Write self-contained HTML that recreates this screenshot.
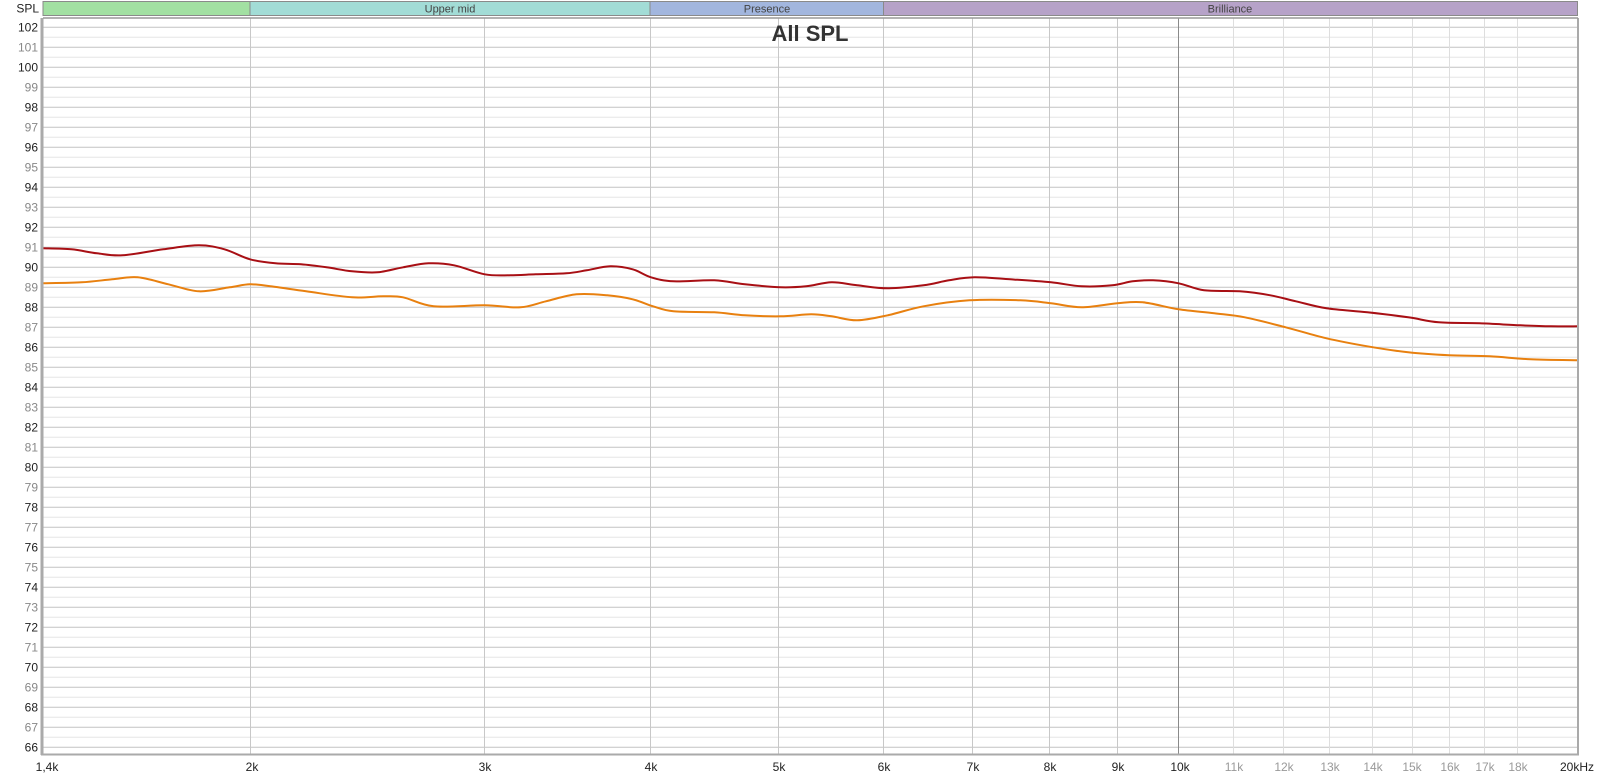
<!DOCTYPE html>
<html><head><meta charset="utf-8"><style>
html,body{margin:0;padding:0;background:#fff;}
svg{display:block;font-family:"Liberation Sans",sans-serif;}
</style></head><body>
<svg id="s" width="1600" height="779" viewBox="0 0 1600 779" xmlns="http://www.w3.org/2000/svg">
<g id="grid"></g>
<rect x="43" y="1.5" width="207" height="14" fill="#a2e0a2" stroke="#8a8a8a"/>
<rect x="250" y="1.5" width="400" height="14" fill="#a2dcd6" stroke="#8a8a8a"/>
<rect x="650" y="1.5" width="233.5" height="14" fill="#a2b6de" stroke="#8a8a8a"/>
<rect x="883.5" y="1.5" width="694" height="14" fill="#b6a2c8" stroke="#8a8a8a"/>
<g font-size="11" fill="#444" text-anchor="middle">
<text x="450" y="12.5">Upper mid</text>
<text x="767" y="12.5">Presence</text>
<text x="1230" y="12.5">Brilliance</text>
</g>
<text x="39" y="12.5" font-size="12" text-anchor="end" fill="#222">SPL</text>
<text x="810" y="41" font-size="22" font-weight="bold" text-anchor="middle" fill="#333">All SPL</text>
<g id="curves"></g>
<line x1="42" y1="18" x2="42" y2="755" stroke="#aaa" stroke-width="3"/>
<line x1="41" y1="754.5" x2="1579" y2="754.5" stroke="#aaa" stroke-width="2"/>
<line x1="1578" y1="18" x2="1578" y2="755" stroke="#aaa" stroke-width="2"/>
<line x1="43" y1="18" x2="1578" y2="18" stroke="#999" stroke-width="1.5"/>
<g font-size="12" text-anchor="end">
<text x="38" y="31.5" fill="#222">102</text><text x="38" y="51.5" fill="#888">101</text>
<text x="38" y="71.5" fill="#222">100</text><text x="38" y="91.5" fill="#888">99</text>
<text x="38" y="111.5" fill="#222">98</text><text x="38" y="131.5" fill="#888">97</text>
<text x="38" y="151.5" fill="#222">96</text><text x="38" y="171.5" fill="#888">95</text>
<text x="38" y="191.5" fill="#222">94</text><text x="38" y="211.5" fill="#888">93</text>
<text x="38" y="231.5" fill="#222">92</text><text x="38" y="251.5" fill="#888">91</text>
<text x="38" y="271.5" fill="#222">90</text><text x="38" y="291.5" fill="#888">89</text>
<text x="38" y="311.5" fill="#222">88</text><text x="38" y="331.5" fill="#888">87</text>
<text x="38" y="351.5" fill="#222">86</text><text x="38" y="371.5" fill="#888">85</text>
<text x="38" y="391.5" fill="#222">84</text><text x="38" y="411.5" fill="#888">83</text>
<text x="38" y="431.5" fill="#222">82</text><text x="38" y="451.5" fill="#888">81</text>
<text x="38" y="471.5" fill="#222">80</text><text x="38" y="491.5" fill="#888">79</text>
<text x="38" y="511.5" fill="#222">78</text><text x="38" y="531.5" fill="#888">77</text>
<text x="38" y="551.5" fill="#222">76</text><text x="38" y="571.5" fill="#888">75</text>
<text x="38" y="591.5" fill="#222">74</text><text x="38" y="611.5" fill="#888">73</text>
<text x="38" y="631.5" fill="#222">72</text><text x="38" y="651.5" fill="#888">71</text>
<text x="38" y="671.5" fill="#222">70</text><text x="38" y="691.5" fill="#888">69</text>
<text x="38" y="711.5" fill="#222">68</text><text x="38" y="731.5" fill="#888">67</text>
<text x="38" y="751.5" fill="#222">66</text>
</g>
<g font-size="12" text-anchor="middle" fill="#222">
<text x="47" y="771">1,4k</text>
<text x="252" y="771">2k</text>
<text x="485" y="771">3k</text>
<text x="651" y="771">4k</text>
<text x="779" y="771">5k</text>
<text x="884" y="771">6k</text>
<text x="973" y="771">7k</text>
<text x="1050" y="771">8k</text>
<text x="1118" y="771">9k</text>
<text x="1180" y="771">10k</text>
<g fill="#999">
<text x="1234" y="771">11k</text><text x="1284" y="771">12k</text><text x="1330" y="771">13k</text>
<text x="1373" y="771">14k</text><text x="1412" y="771">15k</text><text x="1450" y="771">16k</text>
<text x="1485" y="771">17k</text><text x="1518" y="771">18k</text>
</g>
<text x="1577" y="771">20kHz</text>
</g>
</svg>
<script>
var NS="http://www.w3.org/2000/svg";
function X(f){return 44.3+1327.7*Math.log10(f/1.4);}
function Y(d){return 747.3-(d-66)*20;}
function el(p,t,a){var e=document.createElementNS(NS,t);for(var k in a)e.setAttribute(k,a[k]);p.appendChild(e);return e;}
var g=document.getElementById('grid');
for(var h=0;h<=73;h++){var d=102.5-h*0.5;var y=Y(d);if(y<19||y>753)continue;
 el(g,'line',{x1:43,x2:1578,y1:y,y2:y,stroke:(h%2==1)?'#c4c4c4':'#e6e6e6','stroke-width':1});}
var fs=[2,3,4,5,6,7,8,9,10,11,12,13,14,15,16,17,18];
fs.forEach(function(f){var x=Math.round(X(f))+0.5;var c=f==10?'#8a8a8a':(f>10?'#dedede':'#c8c8c8');
 el(g,'line',{x1:x,x2:x,y1:18,y2:754,stroke:c,'stroke-width':1});});
var S=1.0204;
function path(pts){var P=pts.map(function(p){return [p[0]*S,Y(p[1])];});
 var d='M'+P[0][0]+','+P[0][1];
 for(var i=0;i<P.length-1;i++){var p0=P[i-1]||P[i],p1=P[i],p2=P[i+1],p3=P[i+2]||P[i+1];
  d+=' C'+(p1[0]+(p2[0]-p0[0])/6)+','+(p1[1]+(p2[1]-p0[1])/6)+' '+(p2[0]-(p3[0]-p1[0])/6)+','+(p2[1]-(p3[1]-p1[1])/6)+' '+p2[0]+','+p2[1];}
 return d;}
var red=[[42,90.95],[70,90.9],[95,90.7],[120,90.6],[160,90.9],[195,91.1],[220,90.9],[245,90.4],[270,90.2],[295,90.15],[320,90.0],[345,89.8],[370,89.75],[395,90.0],[420,90.2],[445,90.1],[475,89.65],[500,89.6],[525,89.65],[555,89.7],[575,89.85],[598,90.05],[620,89.9],[638,89.5],[660,89.3],[700,89.35],[730,89.15],[765,89.0],[790,89.05],[815,89.25],[840,89.1],[870,88.95],[905,89.1],[930,89.35],[955,89.5],[990,89.4],[1030,89.25],[1060,89.05],[1090,89.1],[1110,89.3],[1130,89.35],[1155,89.2],[1180,88.85],[1215,88.8],[1245,88.6],[1270,88.3],[1300,87.95],[1340,87.75],[1380,87.5],[1410,87.25],[1450,87.2],[1490,87.1],[1520,87.05],[1547,87.05]];
var org=[[42,89.2],[80,89.25],[110,89.4],[135,89.5],[165,89.15],[195,88.8],[225,89.0],[245,89.15],[265,89.05],[300,88.8],[345,88.5],[375,88.55],[395,88.5],[425,88.05],[475,88.1],[510,88.0],[535,88.3],[565,88.65],[595,88.6],[620,88.4],[640,88.05],[660,87.8],[700,87.75],[730,87.6],[765,87.55],[795,87.65],[815,87.55],[840,87.35],[870,87.6],[905,88.05],[950,88.35],[1000,88.35],[1030,88.2],[1060,88.0],[1095,88.2],[1120,88.25],[1155,87.9],[1190,87.7],[1220,87.5],[1260,87.0],[1300,86.45],[1340,86.05],[1380,85.75],[1420,85.6],[1460,85.55],[1500,85.4],[1547,85.35]];
var c=document.getElementById('curves');
el(c,'path',{d:path(org),fill:'none',stroke:'#e8800f','stroke-width':2});
el(c,'path',{d:path(red),fill:'none',stroke:'#a80f14','stroke-width':2});
</script>
</body></html>
